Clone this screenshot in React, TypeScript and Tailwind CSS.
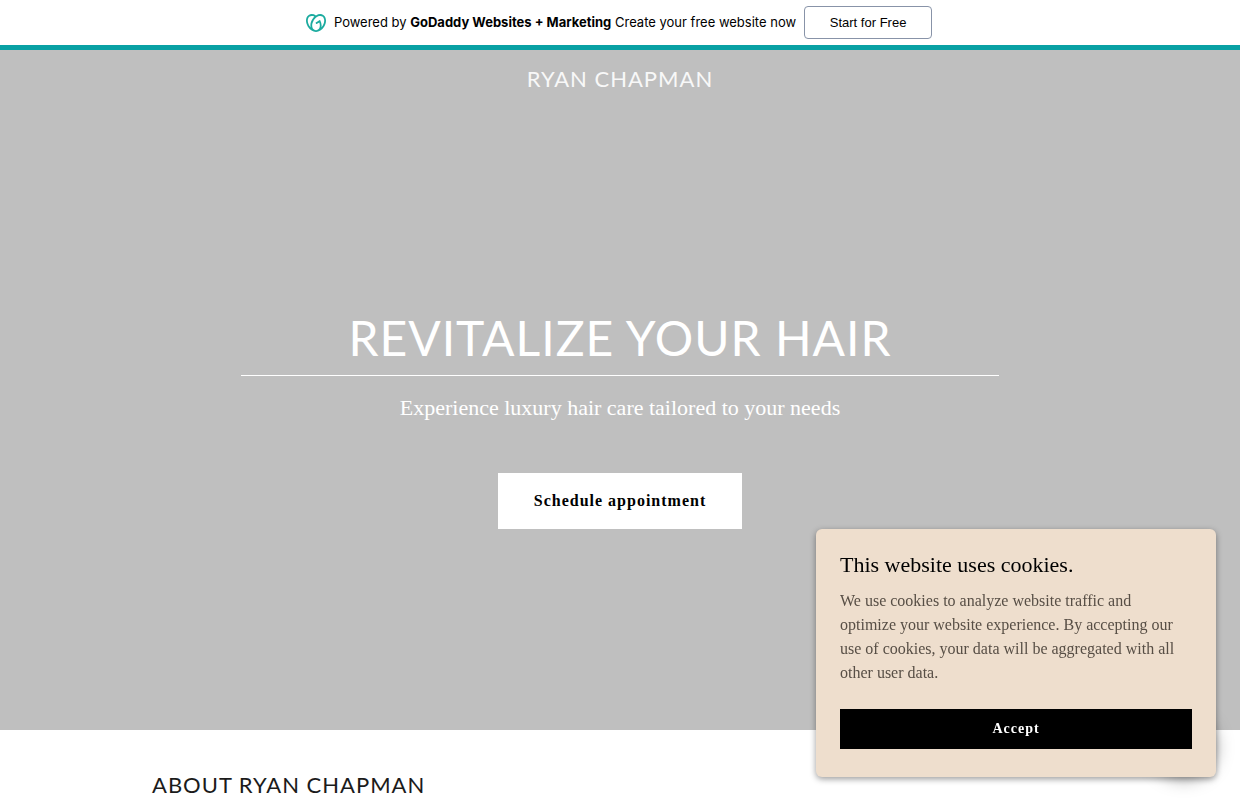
import { useState } from 'react';
import { SiGodaddy } from 'react-icons/si';

function PromoBar() {
  return (
    <div className="flex items-center justify-center border-b-[5px] border-[#09a1a4] bg-white py-1.5 pr-0.5 font-['Inter',sans-serif] text-[13px] text-black">
      <SiGodaddy className="mr-2 size-5 text-[#1bab9f]" aria-hidden="true" />
      <a href="#start" className="pb-0.5 leading-5">
        Powered by <b className="font-bold">GoDaddy Websites + Marketing</b> Create your free website now
      </a>
      <button
        type="button"
        className="ml-2 h-[33px] w-32 rounded-sm border border-[#8893a8] bg-white font-['Liberation_Sans',sans-serif] text-[13px]"
      >
        Start for Free
      </button>
    </div>
  );
}

function Hero() {
  return (
    <header className="flex min-h-[680px] flex-col bg-[#bfbfbf] text-center text-white">
      <div className="pt-[15px]">
        <a
          href="#home"
          className="font-['Lato',sans-serif] text-[22px] leading-7 tracking-[1px] text-[#f8f8f8] uppercase"
        >
          Ryan Chapman
        </a>
      </div>
      <div className="mx-auto flex w-full max-w-[806px] flex-col items-center px-6 pt-[213px]">
        <h1 className="w-full border-b border-white pb-1.5 font-['Lato',sans-serif] text-5xl leading-[62px] tracking-[1px] uppercase">
          Revitalize Your Hair
        </h1>
        <p className="mt-4 text-[22px] leading-8">Experience luxury hair care tailored to your needs</p>
        <a
          href="#appointment"
          className="mt-[49px] flex h-14 items-center bg-white px-9 text-base font-bold tracking-[1px] text-black"
        >
          Schedule appointment
        </a>
      </div>
    </header>
  );
}

function CookieBanner({ onAccept }: { onAccept: () => void }) {
  return (
    <section
      aria-label="Cookie notice"
      className="fixed right-6 bottom-[23px] w-[400px] rounded-md bg-[#eedecd] px-6 pt-5 pb-7 shadow-[0_2px_6px_rgba(0,0,0,0.4)]"
    >
      <h2 className="text-[22px] leading-8 text-black">This website uses cookies.</h2>
      <p className="mt-2 pr-2 text-base leading-6 text-[#574e45]">
        We use cookies to analyze website traffic and optimize your website experience. By accepting our use of
        cookies, your data will be aggregated with all other user data.
      </p>
      <button
        type="button"
        onClick={onAccept}
        className="mt-6 h-10 w-full bg-black text-sm font-bold tracking-[1px] text-white"
      >
        Accept
      </button>
    </section>
  );
}

export default function App() {
  const [accepted, setAccepted] = useState(false);

  return (
    <div className="bg-white font-['Liberation_Serif',serif]">
      <PromoBar />
      <Hero />
      <main className="mx-auto max-w-[984px] px-6 pt-[41px]">
        <h2 className="font-['Lato',sans-serif] text-[22px] leading-7 tracking-[1px] text-[#1b1b1b] uppercase">
          About Ryan Chapman
        </h2>
      </main>
      {/* chat launcher sits under the cookie banner until it is dismissed */}
      <button
        type="button"
        aria-label="Open chat"
        className="fixed right-6 bottom-6 size-16 rounded-full bg-black shadow-[0_3px_18px_rgba(0,0,0,0.35)]"
      />
      {!accepted && <CookieBanner onAccept={() => setAccepted(true)} />}
    </div>
  );
}
